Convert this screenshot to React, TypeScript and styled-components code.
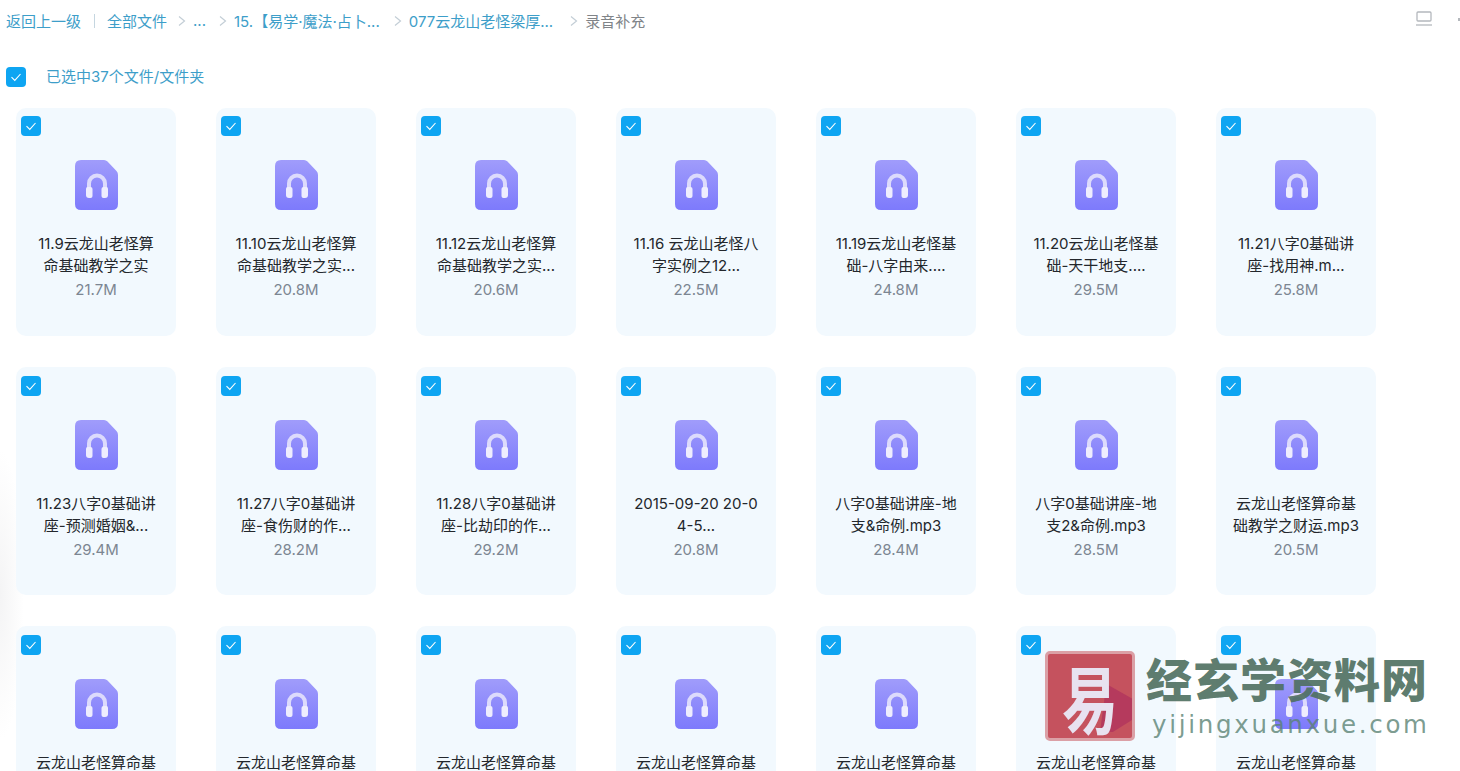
import styled, { createGlobalStyle } from 'styled-components';

interface FileItem {
  lines: string[];
  size?: string;
}

const files: FileItem[] = [
  { lines: ['11.9云龙山老怪算', '命基础教学之实'], size: '21.7M' },
  { lines: ['11.10云龙山老怪算', '命基础教学之实...'], size: '20.8M' },
  { lines: ['11.12云龙山老怪算', '命基础教学之实...'], size: '20.6M' },
  { lines: ['11.16 云龙山老怪八', '字实例之12...'], size: '22.5M' },
  { lines: ['11.19云龙山老怪基', '础-八字由来....'], size: '24.8M' },
  { lines: ['11.20云龙山老怪基', '础-天干地支....'], size: '29.5M' },
  { lines: ['11.21八字0基础讲', '座-找用神.m...'], size: '25.8M' },
  { lines: ['11.23八字0基础讲', '座-预测婚姻&...'], size: '29.4M' },
  { lines: ['11.27八字0基础讲', '座-食伤财的作...'], size: '28.2M' },
  { lines: ['11.28八字0基础讲', '座-比劫印的作...'], size: '29.2M' },
  { lines: ['2015-09-20 20-0', '4-5...'], size: '20.8M' },
  { lines: ['八字0基础讲座-地', '支&命例.mp3'], size: '28.4M' },
  { lines: ['八字0基础讲座-地', '支2&命例.mp3'], size: '28.5M' },
  { lines: ['云龙山老怪算命基', '础教学之财运.mp3'], size: '20.5M' },
  // last row runs off the bottom of the window, only the first line shows
  ...Array.from({ length: 7 }, () => ({ lines: ['云龙山老怪算命基'] })),
];

const GlobalStyle = createGlobalStyle`
  html, body {
    margin: 0;
    height: 771px;
    overflow: hidden;
    background: #fff;
    font-family: Inter, "Noto Sans CJK SC", sans-serif;
  }
`;

function CheckBox() {
  return (
    <CheckSquare>
      <svg width="12" height="12" viewBox="0 0 12 12" fill="none" stroke="#fff" strokeWidth="1.1">
        <path d="M1.5 6.2 4.8 9.4 10.5 3" />
      </svg>
    </CheckSquare>
  );
}

function Chevron() {
  return (
    <ChevronIcon width="8" height="12" viewBox="0 0 8 12" fill="none" stroke="#c3ced6" strokeWidth="1.2">
      <path d="M1 1.5 6.5 6 1 10.5" />
    </ChevronIcon>
  );
}

function AudioIcon() {
  return (
    <svg width="43" height="50" viewBox="0 0 43 50">
      <defs>
        <linearGradient id="audio-bg" x1="0" y1="0" x2="0" y2="1">
          <stop offset="0" stopColor="#a09cfb" />
          <stop offset="1" stopColor="#7d7afc" />
        </linearGradient>
      </defs>
      <path d="M6 0H29Q31 0 32.500 1.500L41.500 11Q43 12.500 43 15V44Q43 50 37 50H6Q0 50 0 44V6Q0 0 6 0Z" fill="url(#audio-bg)" />
      <path d="M14 30V23.500A8 8 0 0 1 30 23.500V30" fill="none" stroke="#dcdafc" strokeWidth="4" />
      <path d="M12.500 27H15.500Q17.500 27 17.500 29V36Q17.500 38 15.500 38H14Q11 38 11 35V29Q11 27 12.500 27Z" fill="#eeedfe" />
      <path d="M28.500 27H31.500Q33 27 33 29V35Q33 38 30 38H28.500Q26.500 38 26.500 36V29Q26.500 27 28.500 27Z" fill="#eeedfe" />
    </svg>
  );
}

export default function App() {
  return (
    <Page>
      <GlobalStyle />
      <EdgeShade />
      <Breadcrumb>
        <CrumbLink>返回上一级</CrumbLink>
        <Divider />
        <CrumbLink $trail={-2}>全部文件</CrumbLink>
        <Chevron />
        <CrumbLink>...</CrumbLink>
        <Chevron />
        <CrumbLink $trail={1}>15.【易学·魔法·占卜...</CrumbLink>
        <Chevron />
        <CrumbLink $trail={4}>077云龙山老怪梁厚...</CrumbLink>
        <Chevron />
        <CrumbCurrent>录音补充</CrumbCurrent>
        <ViewToggle width="18" height="16" viewBox="0 0 18 16" fill="none" stroke="#b4b8bd" strokeWidth="1.300">
          <rect x="2" y="1" width="14" height="9" rx="1" />
          <path d="M1 14H17" />
        </ViewToggle>
        <NextToolTip />
      </Breadcrumb>
      <SelectBar>
        <CheckBox />
        <SelectText>已选中37个文件/文件夹</SelectText>
      </SelectBar>
      <FileGrid>
        {files.map((file, i) => (
          <FileCard key={i}>
            <CardCheck>
              <CheckBox />
            </CardCheck>
            <AudioIcon />
            <FileName>
              {file.lines.map((line, j) => (
                <div key={j}>{line}</div>
              ))}
            </FileName>
            {file.size && <FileSize>{file.size}</FileSize>}
          </FileCard>
        ))}
      </FileGrid>
      <Watermark>
        <Seal>
          <SealGlyph>易</SealGlyph>
        </Seal>
        <MarkText>
          <MarkTitle>经玄学资料网</MarkTitle>
          <MarkUrl>yijingxuanxue.com</MarkUrl>
        </MarkText>
      </Watermark>
    </Page>
  );
}

const Page = styled.div`
  position: relative;
  height: 771px;
  overflow: hidden;
`;

const EdgeShade = styled.div`
  position: absolute;
  left: 0;
  top: 450px;
  width: 24px;
  height: 290px;
  background: radial-gradient(ellipse 100% 50% at 0 50%, #f4f4f5, rgba(255, 255, 255, 0));
`;

const Breadcrumb = styled.nav`
  position: relative;
  display: flex;
  align-items: center;
  height: 42px;
  padding-left: 6px;
  font-size: 15px;
  transform: translateY(-1px);
`;

const CrumbLink = styled.span<{ $trail?: number }>`
  color: #3d9ec9;
  white-space: nowrap;
  margin-right: ${({ $trail }) => $trail ?? 0}px;
`;

const CrumbCurrent = styled.span`
  color: #808488;
  white-space: nowrap;
`;

const Divider = styled.i`
  width: 1px;
  height: 14px;
  margin: 2px 12px 0 13px;
  background: #c5d6e0;
`;

const ChevronIcon = styled.svg`
  margin: 2px 7px 0 13px;
  flex: none;
`;

const ViewToggle = styled.svg`
  margin-left: auto;
  margin-right: 25px;
  margin-top: -2px;
`;

const NextToolTip = styled.i`
  width: 2px;
  height: 3px;
  margin-top: -2px;
  background: #b4b8bd;
`;

const SelectBar = styled.div`
  position: relative;
  display: flex;
  align-items: center;
  gap: 20px;
  height: 20px;
  margin-top: 25px;
  padding-left: 6px;
`;

const SelectText = styled.span`
  margin-bottom: 4px;
  font-size: 15px;
  color: #3d9ec9;
`;

const CheckSquare = styled.span`
  display: flex;
  align-items: center;
  justify-content: center;
  width: 20px;
  height: 20px;
  border-radius: 4px;
  background: #0ea5f2;
`;

const FileGrid = styled.div`
  position: relative;
  display: grid;
  grid-template-columns: repeat(7, 160px);
  grid-auto-rows: 228.200px;
  column-gap: 40px;
  row-gap: 31px;
  margin-top: 21px;
  padding-left: 16px;
`;

const FileCard = styled.div`
  position: relative;
  display: flex;
  flex-direction: column;
  align-items: center;
  padding-top: 52.400px;
  border-radius: 10px;
  background: #f2f9fe;
`;

const CardCheck = styled.div`
  position: absolute;
  top: 8.400px;
  left: 5px;
`;

const FileName = styled.div`
  margin-top: 23px;
  width: 140px;
  font-size: 15px;
  line-height: 22px;
  text-align: center;
  white-space: nowrap;
  color: #23272c;
`;

const FileSize = styled.div`
  margin-top: 2px;
  font-size: 15px;
  line-height: 22px;
  color: #7c8692;
`;

const Watermark = styled.div`
  position: absolute;
  left: 1045px;
  top: 651px;
  display: flex;
  gap: 11px;
`;

const Seal = styled.div`
  position: relative;
  width: 90px;
  height: 90px;
  box-sizing: border-box;
  border: 3px solid #dba0a6;
  border-radius: 5px;
  background: #c5525e;
  display: flex;
  align-items: center;
  justify-content: center;

  &::before {
    content: '';
    position: absolute;
    left: 52px;
    top: 30px;
    width: 32px;
    height: 48px;
    background: #b53a5d;
    clip-path: polygon(20% 0, 100% 30%, 100% 75%, 40% 100%, 0 100%);
  }
`;

const SealGlyph = styled.span`
  position: relative;
  font-family: "Noto Sans CJK SC", sans-serif;
  font-weight: 700;
  font-size: 66px;
  line-height: 1;
  color: #e8e2f0;
  transform: scale(0.85, 1.12);
`;

const MarkText = styled.div`
  display: flex;
  flex-direction: column;
`;

const MarkTitle = styled.div`
  margin-bottom: 6px;
  font-family: "Noto Sans CJK SC", sans-serif;
  font-weight: 900;
  font-size: 46px;
  line-height: 52px;
  letter-spacing: 1px;
  white-space: nowrap;
  color: rgba(79, 112, 97, 0.92);
`;

const MarkUrl = styled.div`
  padding-left: 6px;
  font-family: "DejaVu Sans", sans-serif;
  font-size: 24.500px;
  letter-spacing: 2.700px;
  line-height: 32px;
  color: rgba(90, 130, 115, 0.8);
  white-space: nowrap;
`;
